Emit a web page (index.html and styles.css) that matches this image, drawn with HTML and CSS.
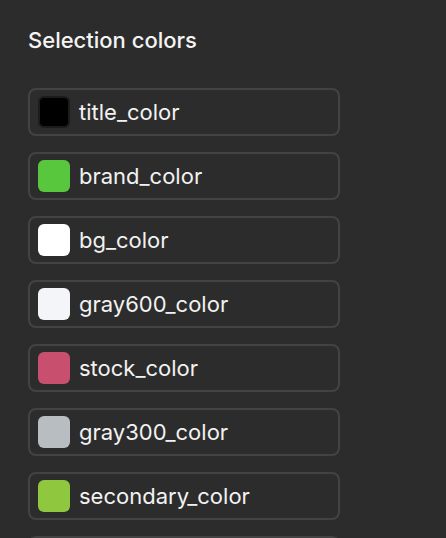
FILE: index.html
```html
<!DOCTYPE html>
<html lang="en">
<head>
<meta charset="utf-8">
<title>Selection colors</title>
<link rel="stylesheet" href="styles.css">
</head>
<body>
<div class="panel">
  <h2 class="title">Selection colors</h2>
  <ul class="list">
    <li class="item"><span class="swatch swatch-black"></span><span class="name">title_color</span></li>
    <li class="item"><span class="swatch swatch-brand"></span><span class="name">brand_color</span></li>
    <li class="item"><span class="swatch swatch-bg"></span><span class="name">bg_color</span></li>
    <li class="item"><span class="swatch swatch-gray600"></span><span class="name">gray600_color</span></li>
    <li class="item"><span class="swatch swatch-stock"></span><span class="name">stock_color</span></li>
    <li class="item"><span class="swatch swatch-gray300"></span><span class="name">gray300_color</span></li>
    <li class="item"><span class="swatch swatch-secondary"></span><span class="name">secondary_color</span></li>
    <li class="item"><span class="swatch swatch-extra"></span></li>
  </ul>
</div>
</body>
</html>
```
FILE: styles.css
```css
html, body {
  margin: 0;
  padding: 0;
  background: #2c2c2c;
  height: 100%;
  overflow: hidden;
}
body {
  font-family: Inter, "Noto Sans", sans-serif;
  color: #f2f2f2;
}
.panel {
  padding: 27px 28px;
}
.title {
  margin: 0;
  font-size: 22px;
  line-height: 26px;
  font-weight: 500;
  color: #f4f4f4;
}
.list {
  list-style: none;
  margin: 35px 0 0;
  padding: 0;
  display: flex;
  flex-direction: column;
  gap: 16px;
}
.item {
  box-sizing: border-box;
  width: 312px;
  height: 48px;
  border: 2px solid #434343;
  border-radius: 8px;
  padding: 0 8px;
  display: flex;
  align-items: center;
  gap: 9px;
}
.swatch {
  box-sizing: border-box;
  width: 32px;
  height: 32px;
  border-radius: 6px;
  flex: none;
}
.swatch-black { background: #000; border: 2px solid #1c1c1c; }
.swatch-brand { background: #58c73e; }
.swatch-bg { background: #ffffff; }
.swatch-gray600 { background: #f4f5f8; }
.swatch-stock { background: #c94f6f; }
.swatch-gray300 { background: #b7bdc1; }
.swatch-secondary { background: #8fc73e; }
.swatch-extra { background: #3d7bd9; }
.name {
  font-size: 22px;
  line-height: 26px;
  font-weight: 400;
  color: #f2f2f2;
}
```
